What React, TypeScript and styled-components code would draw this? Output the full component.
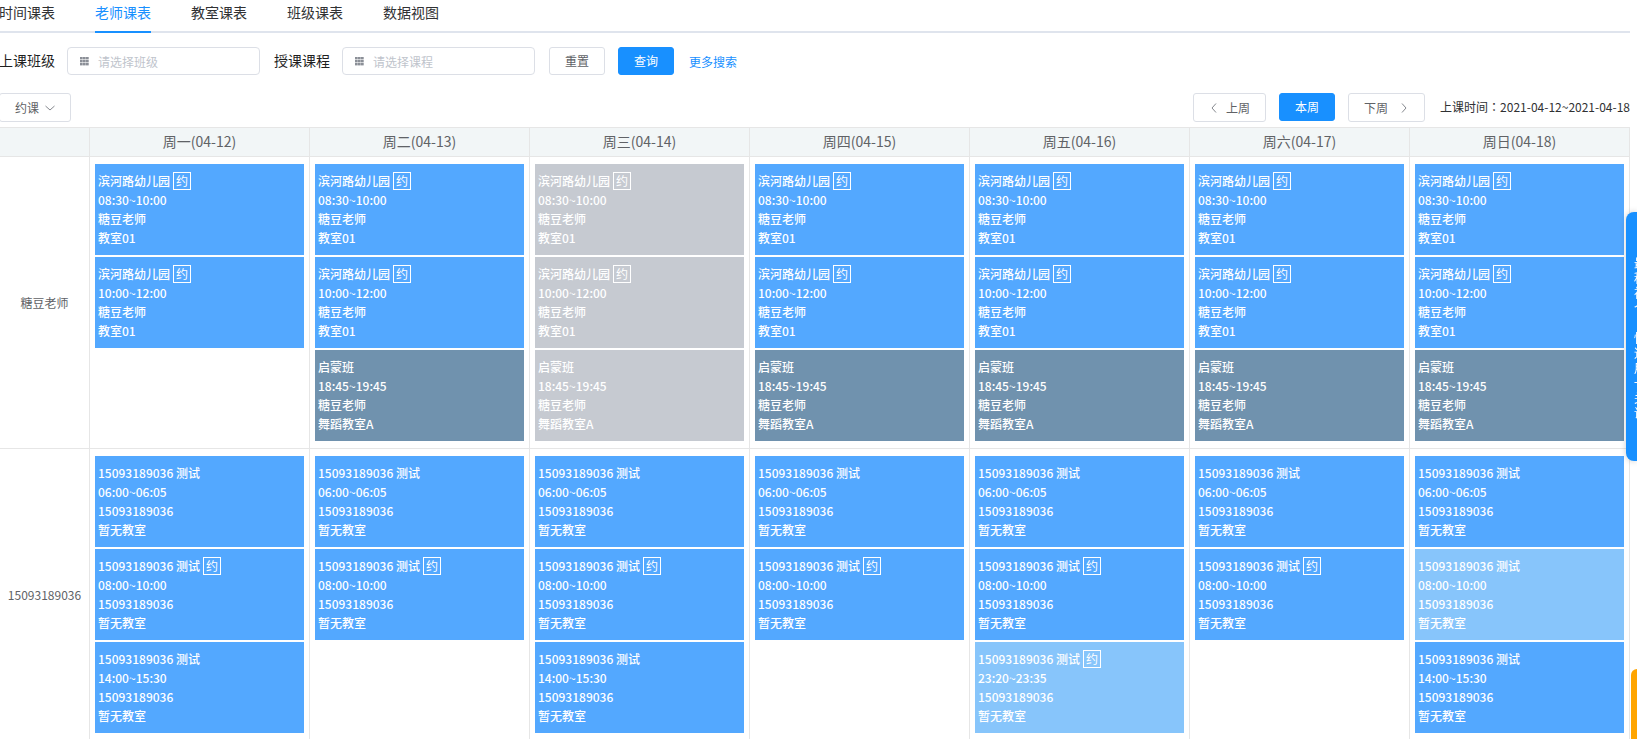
import React from "react";
import styled, { createGlobalStyle } from "styled-components";

const GlobalStyle = createGlobalStyle`
  * { box-sizing: border-box; }
  html, body { margin: 0; height: 100%; overflow: hidden; background: #fff; }
  body, button, input {
    font-family: "Noto Sans CJK SC", "Liberation Sans", sans-serif;
    font-size: 12px;
    color: #606266;
  }
`;

const Page = styled.main`
  padding-right: 7px;
`;

const Controls = styled.div`
  margin-left: -1px;
`;

const Tabs = styled.nav`
  display: flex;
  gap: 40px;
  height: 33px;
  border-bottom: 2px solid #dfe4ed;
`;

const Tab = styled.a<{ $active?: boolean }>`
  height: 33px;
  font-size: 14px;
  line-height: 24px;
  text-decoration: none;
  color: ${(p) => (p.$active ? "#1890ff" : "#303133")};
  border-bottom: 2px solid ${(p) => (p.$active ? "#1890ff" : "transparent")};
`;

const Filters = styled.form`
  display: flex;
  align-items: center;
  height: 28px;
  margin-top: 14px;
`;

const Label = styled.label`
  font-size: 14px;
  line-height: 26px;
  height: 28px;
  color: #1f1f1f;
  margin-right: 12px;
`;

const Field = styled.div`
  display: flex;
  align-items: center;
  gap: 9px;
  width: 193px;
  height: 28px;
  margin-right: 14px;
  padding: 0 12px;
  border: 1px solid #dcdfe6;
  border-radius: 4px;
`;

const Input = styled.input`
  flex: 1;
  min-width: 0;
  padding: 0;
  border: 0;
  outline: 0;
  background: transparent;
  &::placeholder { color: #c0c4cc; opacity: 1; }
`;

const Button = styled.button<{ $primary?: boolean; $tall?: boolean; $gap?: number }>`
  display: flex;
  align-items: center;
  justify-content: center;
  gap: ${(p) => p.$gap ?? 6}px;
  height: ${(p) => (p.$tall ? 29 : 28)}px;
  padding: 0 15px;
  border: 1px solid ${(p) => (p.$primary ? "#1890ff" : "#dcdfe6")};
  border-radius: 3px;
  background: ${(p) => (p.$primary ? "#1890ff" : "#fff")};
  color: ${(p) => (p.$primary ? "#fff" : "#606266")};
  line-height: 18px;
  white-space: nowrap;
`;

const Actions = styled.div`
  display: flex;
  align-items: center;
  gap: 13px;
`;

const MoreLink = styled.a`
  margin-left: 2px;
  color: #1890ff;
  text-decoration: none;
`;

const Toolbar = styled.div`
  display: flex;
  justify-content: space-between;
  margin: 18px 0 5px;
`;

const WeekNav = styled.div`
  display: flex;
  gap: 13px;
`;

const Range = styled.span`
  margin-left: 2px;
  line-height: 28px;
  color: #303133;
`;

const Colon = styled.span`
  font-family: "Noto Sans CJK TC", sans-serif;
`;

const Table = styled.table`
  width: 100%;
  table-layout: fixed;
  border-collapse: separate;
  border-spacing: 0;
  border-top: 1px solid #e6e6e6;
`;

const DayHead = styled.th`
  height: 29px;
  padding: 0 0 2px;
  background: #f2f6f7;
  border-right: 1px solid #e6e6e6;
  border-bottom: 1px solid #e6e6e6;
  font-size: 14px;
  font-weight: 400;
  line-height: 26px;
  &:first-child { width: 90px; }
`;

const TeacherHead = styled.th`
  padding: 0;
  border-right: 1px solid #e6e6e6;
  border-bottom: 1px solid #e6e6e6;
  font-weight: 400;
`;

const DayCell = styled.td`
  padding: 7px 5px;
  vertical-align: top;
  border-right: 1px solid #e6e6e6;
  border-bottom: 1px solid #e6e6e6;
`;

const CardList = styled.div`
  display: flex;
  flex-direction: column;
  gap: 2px;
`;

type Tone = "blue" | "slate" | "grey" | "light";

const tones: Record<Tone, string> = {
  blue: "#53a8ff",
  slate: "#7092ae",
  grey: "#c6cad1",
  light: "#87c5fb",
};

const Card = styled.article<{ $tone: Tone }>`
  height: 91px;
  padding: 7px 3px 8px;
  background: ${(p) => tones[p.$tone]};
  color: #fff;
  font-weight: 500;
`;

const Line = styled.div`
  display: flex;
  align-items: center;
  gap: 3px;
  height: 19px;
  line-height: 19px;
  white-space: nowrap;
`;

const Badge = styled.span`
  width: 18px;
  height: 18px;
  border: 1px solid #fff;
  font-weight: 400;
  line-height: 16px;
  text-align: center;
`;

const SideTab = styled.aside`
  position: fixed;
  top: 212px;
  right: 0;
  width: 11px;
  height: 249px;
  padding: 43px 0 0 8px;
  overflow: hidden;
  border-radius: 8px 0 0 8px;
  background: #1890ff;
  box-shadow: 0 0 6px rgba(0, 0, 0, 0.2);
  color: #fff;
`;

const SideChar = styled.span`
  display: block;
  width: 12px;
  height: 15px;
  line-height: 15px;
`;

const OrangeTab = styled.aside`
  position: fixed;
  top: 669px;
  right: 0;
  bottom: 0;
  width: 6px;
  border-radius: 6px 0 0 0;
  background: #ffa500;
`;

const GridIcon = () => (
  <svg width="9" height="9" viewBox="0 0 9 9" fill="#8b8f97" aria-hidden="true">
    {[0, 3, 6].map((y) => [0, 3, 6].map((x) => (
      <rect key={`${x}-${y}`} x={x} y={y} width="2.7" height="2.4" />
    )))}
  </svg>
);

const Chevron = ({ d }: { d: string }) => (
  <svg width="10" height="10" viewBox="0 0 10 10" fill="none" stroke="#85888e" aria-hidden="true">
    <path d={d} />
  </svg>
);

const days = ["周一(04-12)", "周二(04-13)", "周三(04-14)", "周四(04-15)", "周五(04-16)", "周六(04-17)", "周日(04-18)"];

interface Lesson {
  name: string;
  time: string;
  teacher: string;
  room: string;
  tone: Tone;
  booked?: boolean;
}

const park = (time: string, tone: Tone): Lesson => ({
  name: "滨河路幼儿园", time, teacher: "糖豆老师", room: "教室01", tone, booked: true,
});
const dance = (tone: Tone): Lesson => ({
  name: "启蒙班", time: "18:45~19:45", teacher: "糖豆老师", room: "舞蹈教室A", tone,
});
const trial = (time: string, booked = false, tone: Tone = "blue"): Lesson => ({
  name: "15093189036 测试", time, teacher: "15093189036", room: "暂无教室", tone, booked,
});

const sugarDay = (tone: Tone, danceTone?: Tone) => [
  park("08:30~10:00", tone),
  park("10:00~12:00", tone),
  ...(danceTone ? [dance(danceTone)] : []),
];

const rows: { teacher: string; days: Lesson[][] }[] = [
  {
    teacher: "糖豆老师",
    days: [
      sugarDay("blue"),
      sugarDay("blue", "slate"),
      sugarDay("grey", "grey"),
      sugarDay("blue", "slate"),
      sugarDay("blue", "slate"),
      sugarDay("blue", "slate"),
      sugarDay("blue", "slate"),
    ],
  },
  {
    teacher: "15093189036",
    days: [
      [trial("06:00~06:05"), trial("08:00~10:00", true), trial("14:00~15:30")],
      [trial("06:00~06:05"), trial("08:00~10:00", true)],
      [trial("06:00~06:05"), trial("08:00~10:00", true), trial("14:00~15:30")],
      [trial("06:00~06:05"), trial("08:00~10:00", true)],
      [trial("06:00~06:05"), trial("08:00~10:00", true), trial("23:20~23:35", true, "light")],
      [trial("06:00~06:05"), trial("08:00~10:00", true)],
      [trial("06:00~06:05"), trial("08:00~10:00", false, "light"), trial("14:00~15:30")],
    ],
  },
];

const LessonCard = ({ lesson }: { lesson: Lesson }) => (
  <Card $tone={lesson.tone}>
    <Line>{lesson.name}{lesson.booked && <Badge>约</Badge>}</Line>
    <Line>{lesson.time}</Line>
    <Line>{lesson.teacher}</Line>
    <Line>{lesson.room}</Line>
  </Card>
);

export default function App() {
  return (
    <>
      <GlobalStyle />
      <Page>
        <Controls>
          <Tabs>
            {["时间课表", "老师课表", "教室课表", "班级课表", "数据视图"].map((t, i) => (
              <Tab key={t} href="#" $active={i === 1}>{t}</Tab>
            ))}
          </Tabs>
          <Filters>
            <Label htmlFor="class">上课班级</Label>
            <Field><GridIcon /><Input id="class" placeholder="请选择班级" /></Field>
            <Label htmlFor="course">授课课程</Label>
            <Field><GridIcon /><Input id="course" placeholder="请选择课程" /></Field>
            <Actions>
              <Button type="button">重置</Button>
              <Button type="button" $primary>查询</Button>
              <MoreLink href="#">更多搜索</MoreLink>
            </Actions>
          </Filters>
          <Toolbar>
            <Button type="button" $tall>约课<Chevron d="M0.5 3l4.5 4 4.5-4" /></Button>
            <WeekNav>
              <Button type="button" $tall $gap={7}><Chevron d="M7 0.5L3 5l4 4.5" />上周</Button>
              <Button type="button" $primary>本周</Button>
              <Button type="button" $tall $gap={11}>下周<Chevron d="M3 0.5l4 4.5-4 4.5" /></Button>
              <Range>上课时间<Colon>：</Colon>2021-04-12~2021-04-18</Range>
            </WeekNav>
          </Toolbar>
        </Controls>
        <Table>
          <thead>
            <tr>
              <DayHead />
              {days.map((d) => <DayHead key={d} scope="col">{d}</DayHead>)}
            </tr>
          </thead>
          <tbody>
            {rows.map((row) => (
              <tr key={row.teacher}>
                <TeacherHead scope="row">{row.teacher}</TeacherHead>
                {row.days.map((lessons, i) => (
                  <DayCell key={days[i]}>
                    <CardList>
                      {lessons.map((l) => <LessonCard key={l.time} lesson={l} />)}
                    </CardList>
                  </DayCell>
                ))}
              </tr>
            ))}
          </tbody>
        </Table>
      </Page>
      <SideTab>
        {[..."最程视个　快速用一关课"].map((c, i) => <SideChar key={i}>{c}</SideChar>)}
      </SideTab>
      <OrangeTab />
    </>
  );
}
